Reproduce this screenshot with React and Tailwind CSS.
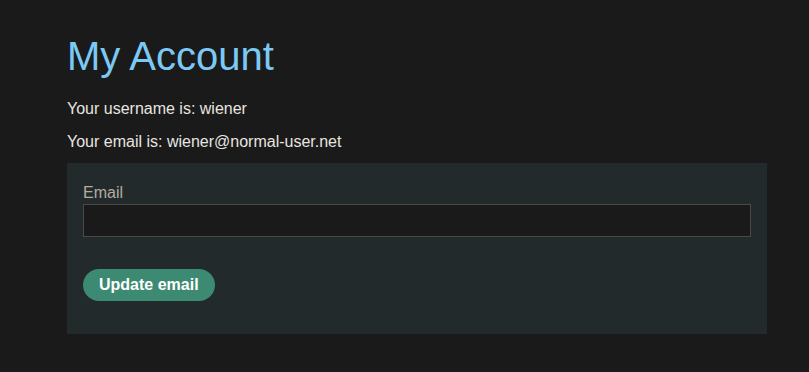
export default function App() {
  return (
    <div
      className="min-h-[372px] w-full bg-[#1a1a1a] pt-8 pl-[67px]"
      style={{ fontFamily: '"Liberation Sans", Arial, sans-serif' }}
    >
      <div className="w-[700px]">
        <h1 className="text-[40px] leading-[48px] text-[#7cc9f5] font-normal mb-5">My Account</h1>
        <p className="text-[16px] leading-[17px] text-[#e8e5e0] mb-4">Your username is: wiener</p>
        <p className="text-[16px] leading-[17px] text-[#e8e5e0] mb-[13px]">Your email is: wiener@normal-user.net</p>
        <form
          className="bg-[#222a2b] px-4 pt-[21px] pb-[33px] flex flex-col items-start"
          onSubmit={(e) => e.preventDefault()}
        >
          <label className="block text-[16px] leading-[17px] text-[#b3aca4] mb-[3px]">Email</label>
          <input
            type="email"
            className="block w-full h-[33px] bg-[#1a1a1a] border border-[#4a4a48] text-[#e8e5e0] px-2 outline-none"
          />
          <button
            type="submit"
            className="mt-8 h-8 px-4 rounded-full bg-[#3d8a73] text-white font-bold text-[16px] leading-none"
          >
            Update email
          </button>
        </form>
      </div>
    </div>
  );
}
